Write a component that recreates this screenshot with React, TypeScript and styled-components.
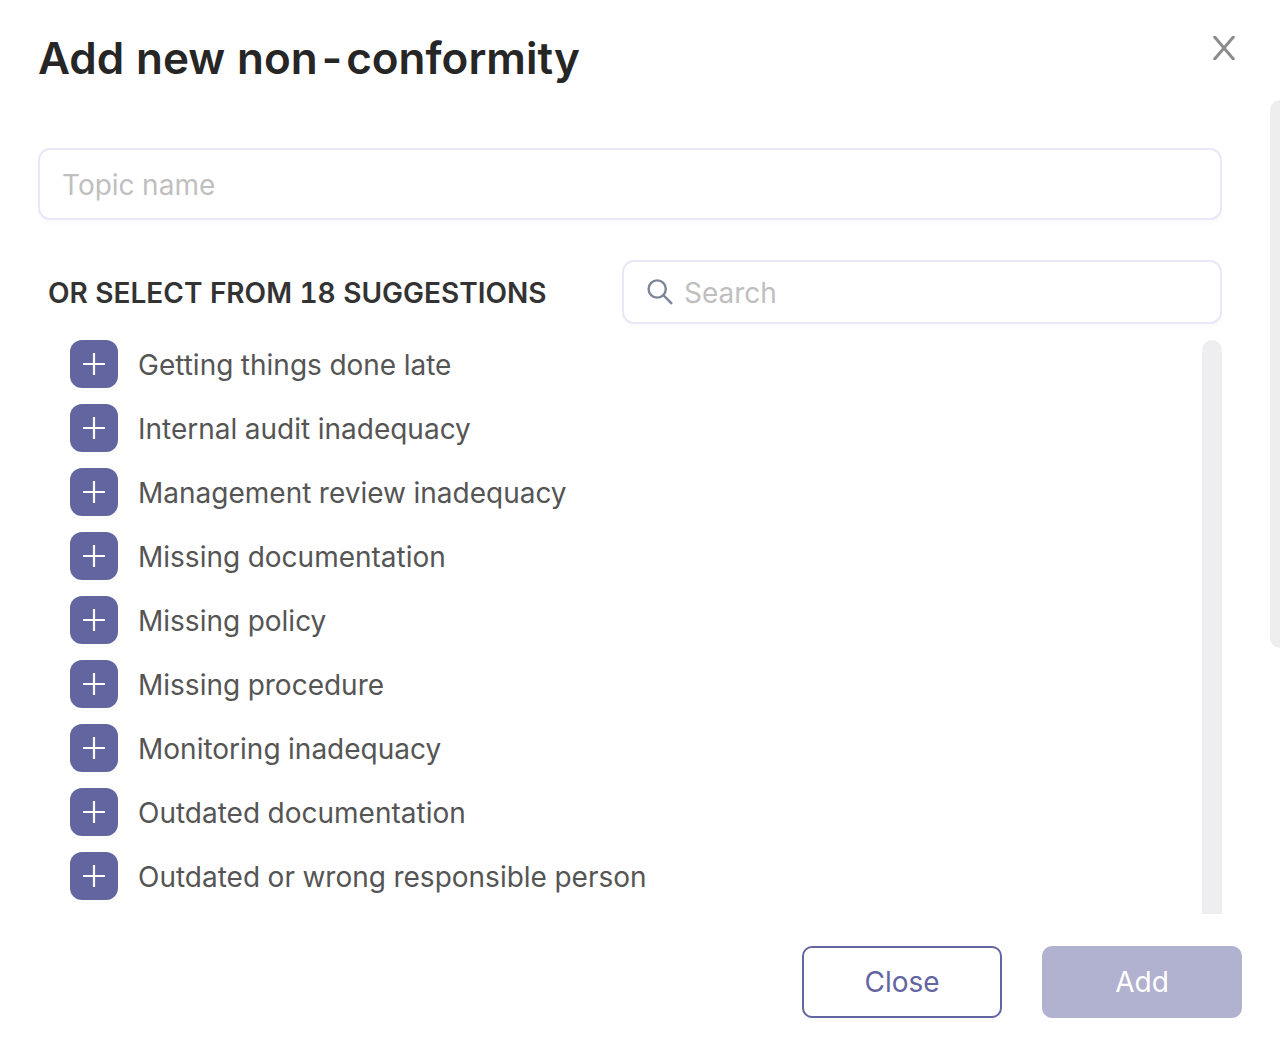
import React, { useState } from "react";
import styled, { createGlobalStyle } from "styled-components";

const GlobalStyle = createGlobalStyle`
  *, *::before, *::after { box-sizing: border-box; }
  body {
    margin: 0;
    background: #fff;
    color: #555;
    font-family: Inter, "Liberation Sans", sans-serif;
    font-size: 28px;
    line-height: 40px;
    font-variant-numeric: tabular-nums;
    font-feature-settings: "tnum";
  }
  button, input { font: inherit; }
`;

const Dialog = styled.section`
  display: flex;
  flex-direction: column;
  overflow: hidden;
`;

const Header = styled.header`
  display: flex;
  justify-content: space-between;
  align-items: flex-start;
  height: 100px;
  padding: 28px 36px 0 38px;
`;

const Title = styled.h1`
  margin: 0;
  font-size: 44px;
  line-height: 60px;
  font-weight: 600;
  color: #262626;
`;

const IconButton = styled.button`
  display: grid;
  place-items: center;
  width: 40px;
  height: 40px;
  padding: 0;
  border: 0;
  background: none;
  color: #8c8c8c;
  cursor: pointer;
`;

const Body = styled.div`
  display: flex;
  justify-content: space-between;
`;

const Content = styled.div`
  flex: 1;
  min-width: 0;
  padding: 48px 48px 0 38px;
`;

const PageThumb = styled.div`
  width: 10px;
  height: 548px;
  border-radius: 10px 0 0 10px;
  background: #eeeef0;
`;

const Field = styled.label<{ $height: number }>`
  display: flex;
  align-items: center;
  gap: 10px;
  flex: 1;
  height: ${(p) => p.$height}px;
  padding: 0 22px;
  border: 2px solid #e8e8f8;
  border-radius: 12px;
  background: #fff;
  box-shadow: 0 4px 4px rgba(0, 0, 0, 0.02);
  color: #7c8698;
`;

const TextInput = styled.input`
  flex: 1;
  min-width: 0;
  height: 42px;
  padding: 2px 0 0;
  border: 0;
  outline: 0;
  background: none;
  color: #555;
  &::placeholder { color: #bfbfbf; opacity: 1; }
`;

const Toolbar = styled.div`
  display: flex;
  align-items: center;
  margin: 40px 0 16px;
`;

const Subtitle = styled.h2`
  flex: 0 0 584px;
  margin: 0;
  padding: 2px 0 0 10px;
  font-size: 28px;
  line-height: 40px;
  font-weight: 600;
  color: #333;
`;

const Suggestions = styled.div`
  display: flex;
  justify-content: space-between;
`;

const List = styled.ul`
  display: flex;
  flex-direction: column;
  gap: 16px;
  margin: 0;
  padding: 0 0 14px 32px;
  list-style: none;
`;

const Item = styled.li`
  display: flex;
  align-items: center;
  gap: 20px;
`;

const ItemName = styled.span`
  padding-top: 2px;
`;

const AddItem = styled.button`
  display: grid;
  place-items: center;
  width: 48px;
  height: 48px;
  padding: 0;
  border: 0;
  border-radius: 12px;
  background: #62659f;
  color: #fff;
  box-shadow: 0 4px 0 rgba(0, 0, 0, 0.016);
  cursor: pointer;
`;

const ListThumb = styled.div`
  width: 20px;
  border-radius: 10px 10px 0 0;
  background: #eeeef0;
`;

const Footer = styled.footer`
  display: flex;
  justify-content: flex-end;
  gap: 40px;
  padding: 32px 38px 24px;
`;

const Action = styled.button<{ $primary?: boolean }>`
  width: 200px;
  height: 72px;
  padding: 0;
  border: 2px solid ${(p) => (p.$primary ? "#b1b1d0" : "#62659f")};
  border-radius: 10px;
  background: ${(p) => (p.$primary ? "#b1b1d0" : "#fff")};
  color: ${(p) => (p.$primary ? "#fff" : "#62659f")};
  box-shadow: ${(p) => (p.$primary ? "none" : "0 4px 0 rgba(0, 0, 0, 0.016)")};
`;

const topics = [
  "Getting things done late",
  "Internal audit inadequacy",
  "Management review inadequacy",
  "Missing documentation",
  "Missing policy",
  "Missing procedure",
  "Monitoring inadequacy",
  "Outdated documentation",
  "Outdated or wrong responsible person",
];

const CloseIcon = () => (
  <svg width="24" height="24" viewBox="0 0 24 24" fill="none" stroke="currentColor" strokeWidth="3" aria-hidden="true">
    <path d="M1.8 0 22.2 24M22.2 0 1.8 24" />
  </svg>
);

const SearchIcon = () => (
  <svg width="28" height="28" viewBox="-1 -1 28 28" fill="none" stroke="currentColor" strokeWidth="2.4" aria-hidden="true">
    <circle cx="10.2" cy="10" r="8.6" />
    <path d="M16.3 16.1 25 24.8" />
  </svg>
);

const PlusIcon = () => (
  <svg width="22" height="22" viewBox="0 0 22 22" fill="none" stroke="currentColor" strokeWidth="2.2" aria-hidden="true">
    <path d="M11 0v22M0 11h22" />
  </svg>
);

export default function App() {
  const [topic, setTopic] = useState("");
  const [query, setQuery] = useState("");
  const shown = topics.filter((t) => t.toLowerCase().includes(query.toLowerCase()));

  return (
    <>
      <GlobalStyle />
      <Dialog role="dialog" aria-labelledby="dialog-title">
        <Header>
          <Title id="dialog-title">Add new non-conformity</Title>
          <IconButton type="button" aria-label="Close dialog">
            <CloseIcon />
          </IconButton>
        </Header>
        <Body>
          <Content>
            <Field $height={72}>
              <TextInput
                aria-label="Topic name"
                placeholder="Topic name"
                value={topic}
                onChange={(e) => setTopic(e.target.value)}
              />
            </Field>
            <Toolbar>
              <Subtitle>OR SELECT FROM 18 SUGGESTIONS</Subtitle>
              <Field $height={64}>
                <SearchIcon />
                <TextInput
                  aria-label="Search"
                  placeholder="Search"
                  value={query}
                  onChange={(e) => setQuery(e.target.value)}
                />
              </Field>
            </Toolbar>
            <Suggestions>
              <List>
                {shown.map((t) => (
                  <Item key={t}>
                    <AddItem type="button" aria-label={`Add ${t}`} onClick={() => setTopic(t)}>
                      <PlusIcon />
                    </AddItem>
                    <ItemName>{t}</ItemName>
                  </Item>
                ))}
              </List>
              <ListThumb />
            </Suggestions>
          </Content>
          <PageThumb />
        </Body>
        <Footer>
          <Action type="button">Close</Action>
          <Action type="button" $primary disabled={!topic}>
            Add
          </Action>
        </Footer>
      </Dialog>
    </>
  );
}
